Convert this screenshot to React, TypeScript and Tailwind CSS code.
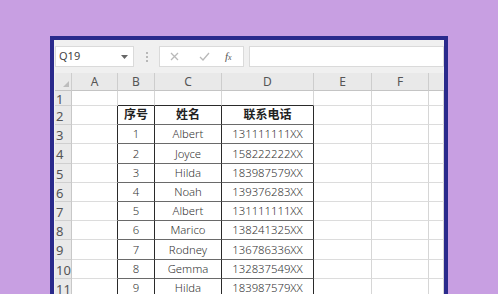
import React from "react";

const cols = [17, 46, 37, 67, 92, 58, 57, 15];
const letters = ["", "A", "B", "C", "D", "E", "F", ""];
const heights = [19, 19, 20, 19, 19, 19, 19, 20, 19, 19];

const data: [string, string, string][] = [
  ["序号", "姓名", "联系电话"],
  ["1", "Albert", "131111111XX"],
  ["2", "Joyce", "158222222XX"],
  ["3", "Hilda", "183987579XX"],
  ["4", "Noah", "139376283XX"],
  ["5", "Albert", "131111111XX"],
  ["6", "Marico", "138241325XX"],
  ["7", "Rodney", "136786336XX"],
  ["8", "Gemma", "132837549XX"],
  ["9", "Hilda", "183987579XX"],
  ["10", "Rodney", "136786336XX"],
];

const font = { fontFamily: '"Noto Sans", "Noto Sans CJK SC", sans-serif' };

function Row({ n, height }: { n: number; height: number }) {
  const inTable = n >= 2 && n <= 11;
  const rec = inTable ? data[n - 2] : null;
  return (
    <div className="flex" style={{ height }}>
      {cols.map((w, i) => {
        let rCls = "border-r-[#d6d6d6]";
        if (inTable && (i === 1 || i === 2 || i === 3 || i === 4)) rCls = "border-r-[#2a2a2a]";
        if (i === 0) rCls = "border-r-[#c8c8c8]";
        let bCls = "border-b-[#dcdcdc]";
        if (i === 0) bCls = "border-b-[#cfcfcf]";
        if (n === 1 && i >= 2 && i <= 4) bCls = "border-b-[#2a2a2a]";
        if (inTable && i >= 2 && i <= 4) bCls = "border-b-[#6a6a6a]";
        const bg = i === 0 ? "bg-[#e9e9e9]" : "bg-white";
        let content: React.ReactNode = null;
        if (i === 0) {
          content = (
            <span className="pl-[1px] text-[13px] leading-none text-[#555]">{n}</span>
          );
        } else if (rec && i >= 2 && i <= 4) {
          const t = rec[i - 2];
          content =
            n === 2 ? (
              <span className="text-[12px] font-bold leading-none text-[#222]">{t}</span>
            ) : (
              <span className="text-[11.3px] font-light leading-none text-[#333]">{t}</span>
            );
        }
        return (
          <div
            key={i}
            style={{ width: w }}
            className={`flex shrink-0 items-center border-r border-b ${rCls} ${bCls} ${bg} ${
              i === 0 ? "justify-start pt-[2px]" : "justify-center"
            }`}
          >
            {content}
          </div>
        );
      })}
    </div>
  );
}

export default function App() {
  return (
    <div
      className="h-[294px] w-[498px] overflow-hidden bg-[#c89fe2] pl-[50px] pt-[36px]"
      style={font}
    >
      <div className="h-[270px] w-[398px] border-x-4 border-t-4 border-[#2a2a8c] bg-[#f0f0f0] pl-[1px]">
        {/* formula bar */}
        <div className="flex h-[33px] items-center bg-[#f0f0f0]">
          <div className="flex h-[21px] w-[79px] items-center justify-between border border-[#dadada] bg-white pl-[3px] pr-[5px]">
            <span className="text-[11px] text-[#444]">Q19</span>
            <svg width="7" height="4" viewBox="0 0 7 4">
              <path d="M0 0 L7 0 L3.5 4 Z" fill="#666" />
            </svg>
          </div>
          <div className="flex w-[25px] flex-col items-center justify-center gap-[2px]">
            <span className="block h-[2px] w-[2px] bg-[#b8b8b8]" />
            <span className="block h-[2px] w-[2px] bg-[#b8b8b8]" />
            <span className="block h-[2px] w-[2px] bg-[#b8b8b8]" />
          </div>
          <div className="flex h-[21px] w-[85px] items-center border border-[#dadada] bg-white">
            <svg width="9" height="9" viewBox="0 0 9 9" className="ml-[10px]">
              <path d="M1 1 L8 8 M8 1 L1 8" stroke="#b9b9b9" strokeWidth="1.3" />
            </svg>
            <svg width="11" height="9" viewBox="0 0 11 9" className="ml-[20px]">
              <path d="M1 5 L4 8 L10 1" stroke="#b9b9b9" strokeWidth="1.3" fill="none" />
            </svg>
            <span
              className="ml-[15px] text-[11px] italic text-[#555]"
              style={{ fontFamily: '"Liberation Serif", serif' }}
            >
              f<span className="text-[8px]">x</span>
            </span>
          </div>
          <div className="ml-[5px] h-[21px] flex-1 border border-[#dadada] bg-white" />
        </div>
        {/* column headers */}
        <div className="flex h-[18px] bg-[#e9e9e9]">
          {cols.map((w, i) => (
            <div
              key={i}
              style={{ width: w }}
              className={`relative flex shrink-0 items-center justify-center border-b border-b-[#c4c4c4] ${
                i < 7 ? "border-r border-r-[#cdcdcd]" : ""
              }`}
            >
              {i === 0 ? (
                <svg width="6" height="6" viewBox="0 0 6 6" className="absolute right-[2px] bottom-[3px]">
                  <path d="M6 0 L6 6 L0 6 Z" fill="#bdbdbd" />
                </svg>
              ) : (
                <span className="text-[12px] text-[#555]">{letters[i]}</span>
              )}
            </div>
          ))}
        </div>
        <Row n={1} height={15} />
        {[2, 3, 4, 5, 6, 7, 8, 9, 10, 11].map((n, k) => (
          <Row key={n} n={n} height={heights[k]} />
        ))}
      </div>
    </div>
  );
}
